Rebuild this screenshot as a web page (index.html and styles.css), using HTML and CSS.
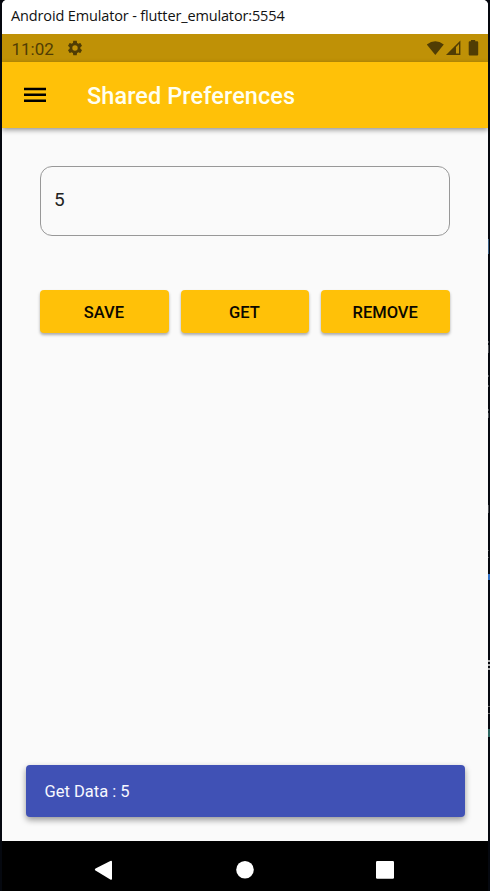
FILE: index.html
```
<!DOCTYPE html>
<html lang="en">
<head>
<meta charset="utf-8">
<title>Android Emulator</title>
<link rel="stylesheet" href="styles.css">
</head>
<body>
<div class="window">
  <header class="titlebar"><span>Android Emulator - flutter_emulator:5554</span></header>
  <div class="statusbar">
    <span class="clock">11:02</span>
    <svg class="gear" width="18" height="18" viewBox="0 0 24 24"><path d="M19.14 12.94c.04-.3.06-.61.06-.94s-.02-.64-.07-.94l2.03-1.58c.18-.14.23-.41.12-.61l-1.92-3.32c-.12-.22-.37-.29-.59-.22l-2.39.96c-.5-.38-1.03-.7-1.62-.94l-.36-2.54c-.04-.24-.24-.41-.48-.41h-3.84c-.24 0-.43.17-.47.41l-.36 2.54c-.59.24-1.13.57-1.62.94l-2.39-.96c-.22-.08-.47 0-.59.22L2.74 8.87c-.12.21-.08.47.12.61l2.03 1.58c-.05.3-.09.63-.09.94s.02.64.07.94l-2.03 1.58c-.18.14-.23.41-.12.61l1.92 3.32c.12.22.37.29.59.22l2.39-.96c.5.38 1.03.7 1.62.94l.36 2.54c.05.24.24.41.48.41h3.84c.24 0 .44-.17.47-.41l.36-2.54c.59-.24 1.13-.56 1.62-.94l2.39.96c.22.08.47 0 .59-.22l1.92-3.32c.12-.22.07-.47-.12-.61zM12 15.6A3.6 3.6 0 1 1 12 8.4a3.6 3.6 0 0 1 0 7.2z"/></svg>
    <svg class="signals" width="54" height="18" viewBox="0 0 54 18">
      <path d="M.8 5.6Q9.3-1.2 17.8 5.6L9.3 15.9z"/>
      <path fill-rule="evenodd" d="M20 16 34.400 1.600V16zM30 8.100v6.500h3V5.100z"/>
      <path d="M28.800 7.500h1.200V16h-1.200z"/>
      <path d="M44.900 1.100h4.300v1.200h2q1 0 1 1v12.200q0 1-1 1h-7.500q-1 0-1-1V3.300q0-1 1-1h1.200z"/>
    </svg>
  </div>
  <div class="appbar">
    <svg width="22" height="16" viewBox="0 0 22 16"><path d="M0 .7h22v2.500H0zM0 6.500h22V9H0zM0 12.600h22v2.500H0z"/></svg>
    <h1>Shared Preferences</h1>
  </div>
  <main class="content">
    <div class="field">5</div>
    <div class="actions">
      <button>SAVE</button>
      <button>GET</button>
      <button>REMOVE</button>
    </div>
    <div class="snackbar">Get Data : 5</div>
  </main>
  <nav class="navbar">
    <svg width="486" height="50" viewBox="0 0 486 50">
      <path d="M93.500 27.500Q92 28.500 93.500 29.600L108.300 38.500Q110 39.300 110 37.700V20.800Q110 19.200 108.300 20z"/>
      <circle cx="243" cy="28.700" r="8.800"/>
      <rect x="374" y="20" width="18" height="17.800" rx="1.200"/>
    </svg>
  </nav>
</div>
<svg class="edge" width="2" height="891" viewBox="0 0 2 891">
  <path fill="#35597e" d="M0 239h1v15H0z"/>
  <path fill="#4b4e54" d="M0 341h1v2H0zM0 345h1v8H0zM0 375h1v2H0zM0 385h1v2H0zM0 409h1v2H0zM0 413h1v5H0zM0 505h1v8H0zM0 550h1v1H0zM0 557h1v1H0z"/>
  <path fill="#2f6fc4" d="M0 574h2v6H0z"/>
  <path fill="#aaa" d="M0 660h2v2H0zM0 664h2v2H0zM0 668h2v2H0z"/>
  <path fill="#666" d="M0 706h2v1H0zM0 713h2v1H0z"/>
  <path fill="#2d6560" d="M0 729h2v8H0z"/>
</svg>
</body>
</html>
```
FILE: styles.css
```
* { box-sizing: border-box; }
body {
  display: flex;
  margin: 0;
  padding-left: 2px;
  height: 891px;
  overflow: hidden;
  background: #05080f;
  font-family: Roboto, sans-serif;
}
.window {
  display: flex;
  flex: none;
  flex-direction: column;
  width: 486px;
  height: 891px;
  border-radius: 5px 5px 0 0;
  overflow: hidden;
  background: #fafafa;
}
.edge { flex: none; }
.titlebar {
  height: 34px;
  padding-left: 9px;
  background: #fff;
  color: #111;
  font: 14.5px/32px "Open Sans", sans-serif;
  letter-spacing: -0.14px;
  white-space: nowrap;
}
.statusbar {
  display: flex;
  align-items: center;
  height: 28px;
  padding: 0 8px 0 9.500px;
  background: #bf9106;
  color: #503d04;
}
.statusbar svg { fill: #503d04; }
.clock { width: 54px; font-size: 17px; line-height: 28px; padding-top: 2px; }
.signals { margin-left: auto; }
.appbar {
  display: flex;
  align-items: center;
  height: 66px;
  padding-left: 22px;
  background: #ffc108;
  box-shadow: 0 2px 5px rgba(0, 0, 0, .42);
  z-index: 1;
}
h1 {
  margin: 2px 0 0 41px;
  color: #fffff0;
  font-size: 23.500px;
  font-weight: 500;
  letter-spacing: .08px;
  line-height: 32px;
}
.content {
  display: flex;
  flex: 1;
  flex-direction: column;
  padding: 38px 38px 24px;
}
.field {
  height: 70px;
  padding-left: 13px;
  border: 1px solid #989898;
  border-radius: 12px;
  color: #222;
  font-size: 19px;
  line-height: 66px;
}
.actions { display: flex; gap: 12px; margin-top: 54px; }
button {
  flex: 1;
  height: 43px;
  padding: 1px 1px 0 0;
  border: 0;
  border-radius: 4px;
  background: #ffc108;
  box-shadow: 0 2px 3px rgba(0, 0, 0, .32);
  color: #0b0800;
  font: 500 16.500px Roboto, sans-serif;
}
.snackbar {
  height: 52px;
  margin: auto -14.500px 0;
  padding-left: 19px;
  border-radius: 4px;
  background: #4051b5;
  box-shadow: 0 3px 6px rgba(0, 0, 0, .4);
  color: #f7f8ff;
  font-size: 16.500px;
  line-height: 53px;
}
.navbar { height: 50px; background: #000; }
.navbar svg { display: block; fill: #fff; }
```
